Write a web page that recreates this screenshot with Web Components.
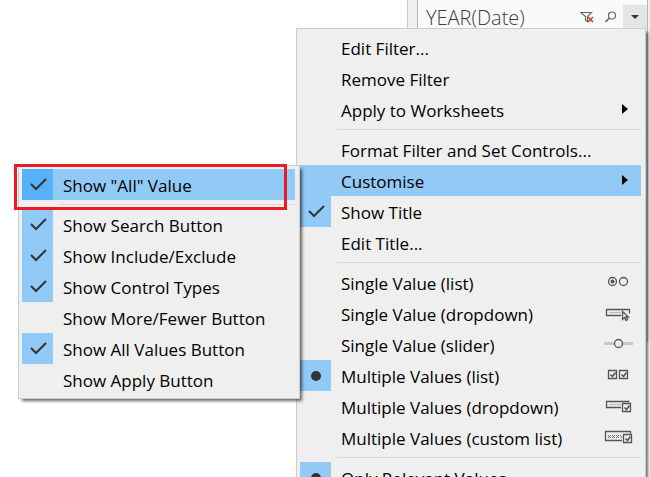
<!DOCTYPE html>
<html lang="en">
<head>
<meta charset="utf-8">
<title>Filter menu</title>
<style>
html, body { height: 100%; }
body { margin: 0; position: relative; overflow: hidden; background: #fff; color: #000; font: 17px/31px "Open Sans", "Noto Sans", sans-serif; }
filter-card { position: absolute; top: 0; right: 0; width: 243px; height: 342px; }
popup-menu.main { position: absolute; top: 28px; right: 4px; width: 350px; }
popup-menu.sub { position: absolute; top: 165px; right: 350px; width: 282px; }
mark-frame { position: absolute; top: 164px; right: 363px; width: 273px; height: 46px; }
</style>
</head>
<body>
<filter-card>YEAR(Date)</filter-card>
<popup-menu class="main">
  <menu-row>Edit Filter...</menu-row>
  <menu-row>Remove Filter</menu-row>
  <menu-row arrow>Apply to Worksheets</menu-row>
  <menu-line></menu-line>
  <menu-row>Format Filter and Set Controls...</menu-row>
  <menu-row arrow active>Customise</menu-row>
  <menu-row mark="check">Show Title</menu-row>
  <menu-row>Edit Title...</menu-row>
  <menu-line></menu-line>
  <menu-row icon="radios">Single Value (list)</menu-row>
  <menu-row icon="drop">Single Value (dropdown)</menu-row>
  <menu-row icon="slider">Single Value (slider)</menu-row>
  <menu-row icon="checks" mark="dot">Multiple Values (list)</menu-row>
  <menu-row icon="dropcheck">Multiple Values (dropdown)</menu-row>
  <menu-row icon="custom">Multiple Values (custom list)</menu-row>
  <menu-line></menu-line>
  <menu-row mark="dot">Only Relevant Values</menu-row>
</popup-menu>
<popup-menu class="sub">
  <menu-row mark="check" active>Show "All" Value</menu-row>
  <menu-line></menu-line>
  <menu-row mark="check">Show Search Button</menu-row>
  <menu-row mark="check">Show Include/Exclude</menu-row>
  <menu-row mark="check">Show Control Types</menu-row>
  <menu-row>Show More/Fewer Button</menu-row>
  <menu-row mark="check">Show All Values Button</menu-row>
  <menu-row>Show Apply Button</menu-row>
</popup-menu>
<mark-frame></mark-frame>
<script>
const define = (name, html, setup) => customElements.define(name, class extends HTMLElement {
  constructor() {
    super();
    this.attachShadow({ mode: 'open' }).innerHTML = html;
  }
  connectedCallback() { if (setup) setup(this, this.shadowRoot); }
});

const box = (x, y) => `<path d="M${x + .5} ${y + .5}h8v8h-8z" fill="#efefef"/><path d="M${x + 2.5} ${y + 4.5}l2 2 3-4" stroke-width="1.6"/>`;
const ICONS = {
  radios: '<circle cx="8.500" cy="8.500" r="4"/><circle cx="8.500" cy="8.500" r="2" fill="#555" stroke="none"/><circle cx="19.500" cy="8.500" r="4"/>',
  drop: '<path d="M17 11.500H2.500v-6h23v4"/><path d="M5 8.500h12" stroke="#bbb"/><path d="M18.500 7.500v8l2-2 1.500 3 1.500-1-1.500-2.500h2.500z" fill="#efefef"/>',
  slider: '<path d="M0 8.500h29" stroke="#c8c8c8" stroke-width="3"/><circle cx="14.500" cy="8.500" r="4" fill="#efefef"/>',
  checks: box(4, 4) + box(15, 4),
  dropcheck: '<path d="M17 10.500H2.500v-6h23"/><path d="M5 7.500h12" stroke="#bbb"/>' + box(18, 6),
  custom: '<path d="M18 12.500H1.500v-9h25v2"/><path d="M4 7l3 3M7 7l-3 3M8 7l3 3M11 7l-3 3M12 7l3 3M15 7l-3 3M16 7l2 3" stroke-width=".8"/>' + box(19, 6)
};
const MARKS = {
  check: '<svg width="31" height="31" fill="none" stroke="#333" stroke-width="2"><path d="M9 15l5 5 10-10"/></svg>',
  dot: '<svg width="31" height="31"><circle cx="16" cy="16" r="5" fill="#333"/></svg>'
};

define('popup-menu', `<style>
:host { display: block; box-sizing: border-box; border: 1px solid #ccc; padding: 3px 4px 3px 3px; background: #efefef; box-shadow: 3px 3px 3px -1px rgba(0,0,0,.6); }
</style><div role="menu"><slot></slot></div>`);

define('menu-line', `<style>
:host { display: block; padding: 4px 0 4px 37px; }
hr { margin: 0; border: 0; height: 1px; background: #d7d7d7; }
</style><hr>`);

define('menu-row', `<style>
:host { display: block; }
button { display: flex; align-items: center; width: 100%; height: 31px; padding: 0; border: 0; background: none; font: inherit; color: inherit; text-align: left; }
.mark { width: 31px; height: 31px; margin-right: 10px; }
.label { flex: 1; padding-top: 2px; white-space: nowrap; }
svg { display: block; }
:host([mark]) .mark, :host([active]) button { background: #91c9f7; }
:host([active][mark]) .mark { background: #56b0fa; }
.icon { margin: 0 8px 2px 0; }
.arrow { margin-right: 13px; }
</style><button type="button" role="menuitem"><span class="mark"></span><span class="label"><slot></slot></span></button>`,
(el, root) => {
  root.querySelector('.mark').innerHTML = MARKS[el.getAttribute('mark')] || '';
  const button = root.querySelector('button');
  if (el.hasAttribute('icon'))
    button.insertAdjacentHTML('beforeend', `<svg class="icon" width="29" height="18" fill="none" stroke="#555" stroke-width="1.3">${ICONS[el.getAttribute('icon')]}</svg>`);
  if (el.hasAttribute('arrow'))
    button.insertAdjacentHTML('beforeend', '<svg class="arrow" width="6" height="14"><path d="M0 1l6 5-6 5z"/></svg>');
});

define('filter-card', `<style>
:host { display: flex; box-sizing: border-box; border-left: 1px solid #ccc; padding: 0 0 0 9px; background: #f0f0f0; }
section { flex: 1; border-left: 1px solid #b5b5b5; border-right: 1px solid #b5b5b5; margin-right: 2px; background: #fafafa; }
header { display: flex; align-items: center; height: 33px; padding-left: 8px; color: #3c3c3c; font: 20px/33px "Open Sans", "Noto Sans", sans-serif; }
h1 { flex: 1; margin: 0; padding-top: 1px; font: inherit; font-weight: 300; }
button { display: flex; justify-content: center; align-items: center; width: 24px; height: 24px; padding: 0; border: 0; background: none; }
.open { background: #e5e5e5; }
.menu { align-self: flex-start; padding-top: 5px; display: flex; }
</style><section><header><h1><slot></slot></h1>
<button type="button" aria-label="Clear filter"><svg width="14" height="14" fill="none" stroke="#666" stroke-width="1.2"><path d="M.5 2.500h11L7.500 6.500v5l-2-1v-4z"/><path d="M8 7l5 5M13 7l-5 5" stroke="#d43b30" stroke-width="1.500"/></svg></button>
<button type="button" aria-label="Search"><svg width="12" height="12" fill="none" stroke="#666" stroke-width="1.2"><circle cx="7" cy="4.500" r="3.500"/><path d="M4.500 7l-4 4" stroke-width="1.600"/></svg></button>
<div class="menu"><button type="button" class="open" aria-label="Menu"><svg width="8" height="4"><path d="M0 0h8L4 4z" fill="#333"/></svg></button></div>
</header></section>`);

define('mark-frame', `<style>:host { display: block; box-sizing: border-box; border: 3px solid #ed1c24; pointer-events: none; }</style>`);
</script>
</body>
</html>
